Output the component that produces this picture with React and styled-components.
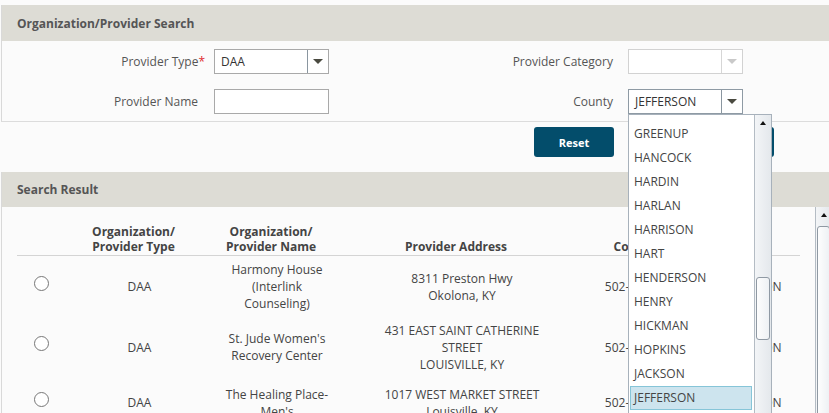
import styled, { createGlobalStyle } from "styled-components";

const GlobalStyle = createGlobalStyle`
  html, body {
    margin: 0;
    overflow: hidden;
    background: #fbfbfb;
  }
  body {
    font-family: "Open Sans", "Noto Sans", sans-serif;
    font-size: 12px;
    color: #444;
  }
`;

const Page = styled.div`
  width: 829px;
  box-sizing: border-box;
  padding: 5px 0 0 1px;
`;

const Panel = styled.section`
  border-left: 1px solid #d9d9d9;
  border-bottom: ${(props) => (props.$open ? "none" : "1px solid #dcdcdc")};
`;

const PanelHeader = styled.h2`
  margin: 0;
  height: ${(props) => props.$h || 36}px;
  display: flex;
  align-items: center;
  padding-left: 15px;
  background: #dddcd5;
  color: #555;
  font-size: 12px;
  font-weight: 700;
`;

const Form = styled.div`
  display: flex;
  flex-direction: column;
  gap: 15px;
  padding: 8px 0 7px;
`;

const FieldRow = styled.div`
  display: flex;
  align-items: center;
`;

const Label = styled.label`
  width: ${(props) => props.$w}px;
  margin-right: ${(props) => props.$gap}px;
  text-align: right;
  color: #555;
  font-size: 12px;
  white-space: nowrap;
`;

const Req = styled.span`
  color: #e0282e;
`;

const SelectWrap = styled.div`
  position: relative;
`;

const SelectBox = styled.div`
  width: 115px;
  height: 25px;
  box-sizing: border-box;
  display: flex;
  align-items: center;
  background: #fff;
  border: 1px solid ${(props) =>
    props.$disabled ? "#d2d2d2" : props.$focus ? "#8e9aa4" : "#a9a9a9"};
`;

const SelectValue = styled.span`
  flex: 1;
  padding-left: 6px;
  color: #333;
  font-size: 12px;
`;

const ArrowCell = styled.span`
  width: 20px;
  height: 100%;
  display: flex;
  align-items: center;
  justify-content: center;
  border-left: 1px solid ${(props) => (props.$disabled ? "#d6d6d6" : "#8a96a0")};
`;

const Caret = styled.span`
  width: 0;
  height: 0;
  border-left: 5px solid transparent;
  border-right: 5px solid transparent;
  border-top: 5px solid ${(props) => (props.$disabled ? "#c9c9c9" : "#4a4a40")};
`;

const TextInput = styled.input`
  width: 115px;
  height: 25px;
  box-sizing: border-box;
  border: 1px solid #a9a9a9;
  background: #fff;
  padding: 0 6px;
  font: inherit;
  outline: none;
`;

const DropList = styled.div`
  position: absolute;
  top: 100%;
  left: 0;
  z-index: 10;
  width: 144px;
  height: 310px;
  box-sizing: border-box;
  display: flex;
  background: #fff;
  border: 1px solid #a7b1bb;
`;

const Items = styled.ul`
  flex: 1;
  list-style: none;
  margin: 0;
  padding: 7px 2px 0 1px;
`;

const Item = styled.li`
  height: 24px;
  box-sizing: border-box;
  line-height: 22px;
  padding-left: 3px;
  color: #444;
  font-size: 12px;
  border: 1px solid ${(props) => (props.$selected ? "#86c5d8" : "transparent")};
  background: ${(props) => (props.$selected ? "#cde4ee" : "transparent")};
`;

const ScrollTrack = styled.div`
  width: ${(props) => props.$w}px;
  flex-shrink: 0;
  display: flex;
  flex-direction: column;
  box-sizing: border-box;
  border-left: 1px solid #b4bcc4;
  background: linear-gradient(to right, #f3f5f7, #e4e8ec);
`;

const ScrollArrow = styled.div`
  height: 16px;
  display: flex;
  align-items: center;
  justify-content: center;
  &::before {
    content: "";
    border-left: 3px solid transparent;
    border-right: 3px solid transparent;
    border-bottom: 4px solid #111;
  }
`;

const ScrollThumb = styled.div`
  margin: ${(props) => props.$top}px 1px 0;
  height: ${(props) => props.$h}px;
  border: 1px solid #8f99a3;
  border-radius: 3px;
  background: linear-gradient(to right, #fdfdfd, #eef1f4);
`;

const ButtonBar = styled.div`
  display: flex;
  gap: 80px;
  padding: 5px 0 0 533px;
  margin-bottom: 15px;
`;

const Button = styled.button`
  width: 80px;
  height: 30px;
  border: none;
  border-radius: 3px;
  background: #034d6b;
  color: #fff;
  font-family: inherit;
  font-size: 11px;
  font-weight: 700;
`;

const ResultBody = styled.div`
  display: flex;
  height: 260px;
`;

const GridArea = styled.div`
  flex: 1;
  padding: 13px 15px 0;
`;

const Table = styled.table`
  width: 783px;
  table-layout: fixed;
  border-collapse: collapse;
`;

const Th = styled.th`
  padding: 4px ${(props) => props.$pad + 12}px 1px ${(props) => props.$pad}px;
  border-bottom: 1px solid #d4d4d4;
  vertical-align: bottom;
  text-align: center;
  line-height: 15px;
  font-size: 12px;
  font-weight: 700;
  color: #444;
`;

const Row = styled.tr`
  height: ${(props) => props.$h}px;
`;

const Td = styled.td`
  padding: 5px ${(props) => props.$pad}px 4px;
  vertical-align: middle;
  text-align: center;
  line-height: 17px;
  font-size: 12px;
  color: #444;
`;

const Radio = styled.span`
  display: block;
  width: 15px;
  height: 15px;
  margin: 0 auto 7px;
  box-sizing: border-box;
  border: 1px solid #777;
  border-radius: 50%;
  background: #fff;
`;

const columns = [
  { w: 48, pad: 4, title: null },
  { w: 149, pad: 4, title: ["Organization/", "Provider Type"] },
  { w: 126, pad: 4, title: ["Organization/", "Provider Name"] },
  { w: 244, pad: 30, title: ["Provider Address"] },
  { w: 118, pad: 4, title: ["Contact"] },
  { w: 98, pad: 4, title: ["County"] },
];

const providers = [
  {
    type: "DAA",
    name: "Harmony House (Interlink Counseling)",
    street: "8311 Preston Hwy",
    city: "Okolona, KY",
    phone: "502-363-2001",
    county: "JEFFERSON",
    h: 60,
  },
  {
    type: "DAA",
    name: "St. Jude Women's Recovery Center",
    street: "431 EAST SAINT CATHERINE STREET",
    city: "LOUISVILLE, KY",
    phone: "502-636-6551",
    county: "JEFFERSON",
    h: 61,
  },
  {
    type: "DAA",
    name: "The Healing Place- Men's",
    street: "1017 WEST MARKET STREET",
    city: "Louisville, KY",
    phone: "502-585-4848",
    county: "JEFFERSON",
    h: 50,
  },
];

const counties = [
  "GREENUP",
  "HANCOCK",
  "HARDIN",
  "HARLAN",
  "HARRISON",
  "HART",
  "HENDERSON",
  "HENRY",
  "HICKMAN",
  "HOPKINS",
  "JACKSON",
  "JEFFERSON",
  "JESSAMINE",
];

const Select = ({ value, disabled, focus, children }) => (
  <SelectWrap>
    <SelectBox $disabled={disabled} $focus={focus}>
      <SelectValue>{value}</SelectValue>
      <ArrowCell $disabled={disabled}>
        <Caret $disabled={disabled} />
      </ArrowCell>
    </SelectBox>
    {children}
  </SelectWrap>
);

const App = () => {
  return (
    <Page>
      <GlobalStyle />
      <Panel>
        <PanelHeader>Organization/Provider Search</PanelHeader>
        <Form>
          <FieldRow>
            <Label $w={203} $gap={9}>
              Provider Type<Req>*</Req>
            </Label>
            <Select value="DAA" />
            <Label $w={284} $gap={15}>
              Provider Category
            </Label>
            <Select disabled />
          </FieldRow>
          <FieldRow>
            <Label $w={196} $gap={16}>
              Provider Name
            </Label>
            <TextInput />
            <Label $w={284} $gap={15}>
              County
            </Label>
            <Select value="JEFFERSON" focus>
              <DropList>
                <Items>
                  {counties.map((c) => (
                    <Item key={c} $selected={c === "JEFFERSON"}>
                      {c}
                    </Item>
                  ))}
                </Items>
                <ScrollTrack $w={17}>
                  <ScrollArrow />
                  <ScrollThumb $top={146} $h={61} />
                </ScrollTrack>
              </DropList>
            </Select>
          </FieldRow>
        </Form>
      </Panel>

      <ButtonBar>
        <Button>Reset</Button>
        <Button>Search</Button>
      </ButtonBar>

      <Panel $open>
        <PanelHeader $h={35}>Search Result</PanelHeader>
        <ResultBody>
          <GridArea>
            <Table>
              <colgroup>
                {columns.map((c, i) => (
                  <col key={i} style={{ width: c.w }} />
                ))}
              </colgroup>
              <thead>
                <tr>
                  {columns.map((c, i) => (
                    <Th key={i} $pad={c.pad}>
                      {c.title &&
                        c.title.map((line, j) => (
                          <span key={j}>
                            {j > 0 && <br />}
                            {line}
                          </span>
                        ))}
                    </Th>
                  ))}
                </tr>
              </thead>
              <tbody>
                {providers.map((p) => (
                  <Row key={p.name} $h={p.h}>
                    <Td $pad={4}>
                      <Radio />
                    </Td>
                    <Td $pad={4}>{p.type}</Td>
                    <Td $pad={4}>{p.name}</Td>
                    <Td $pad={30}>
                      {p.street}
                      <br />
                      {p.city}
                    </Td>
                    <Td $pad={4}>{p.phone}</Td>
                    <Td $pad={4}>{p.county}</Td>
                  </Row>
                ))}
              </tbody>
            </Table>
          </GridArea>
          <ScrollTrack $w={16}>
            <ScrollArrow />
            <ScrollThumb $top={3} $h={240} />
          </ScrollTrack>
        </ResultBody>
      </Panel>
    </Page>
  );
};

export default App;
